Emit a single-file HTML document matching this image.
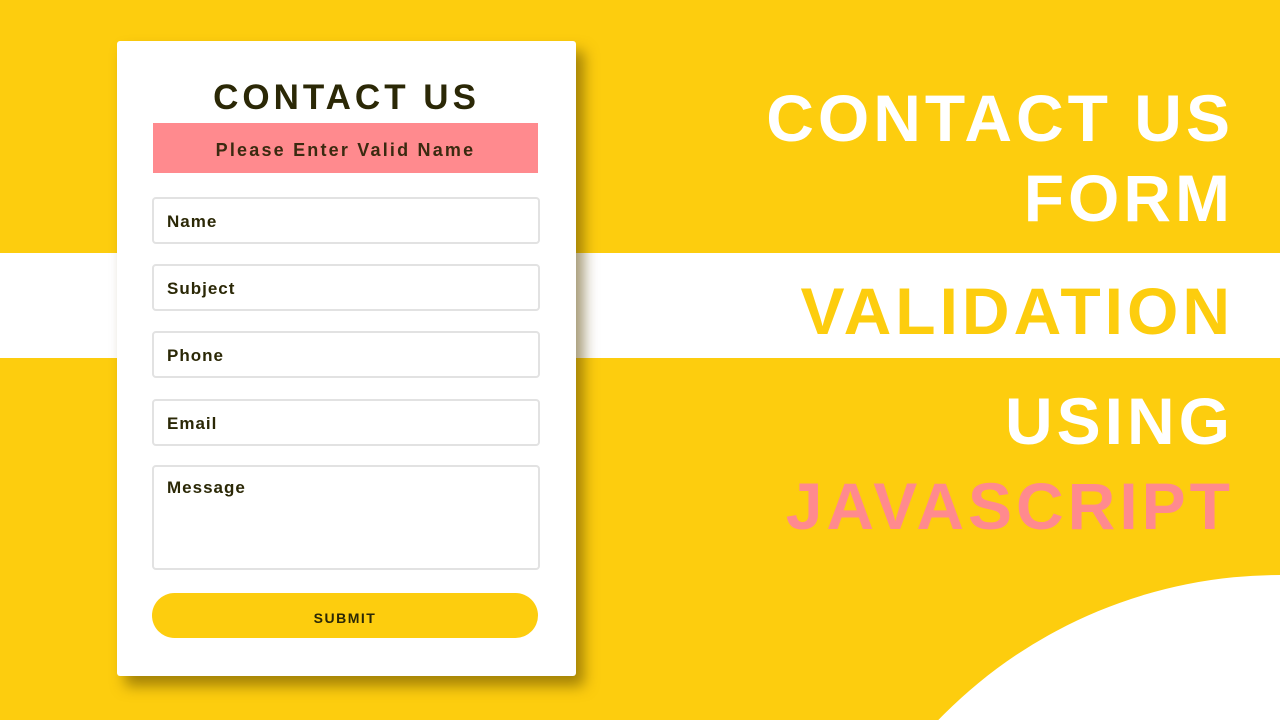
<!DOCTYPE html>
<html><head><style>
*{margin:0;padding:0;box-sizing:border-box}
html,body{width:1280px;height:720px;overflow:hidden}
body{font-family:"Liberation Sans",sans-serif;font-weight:bold}
.wrap{position:relative;width:1280px;height:720px;overflow:hidden;background:#FDCD0E}
.band{position:absolute;left:0;top:253px;width:1280px;height:105px;background:#fff}
.circ{position:absolute;left:805px;top:575px;width:950px;height:950px;border-radius:50%;background:#fff}
.card{position:absolute;left:117px;top:41px;width:459px;height:635px;background:#fff;border-radius:3px;box-shadow:8px 10px 14px rgba(90,70,0,.55)}
.t{position:absolute;left:0;width:459px;text-align:center;font-size:35px;letter-spacing:4px;color:#2b2806}
.err{position:absolute;left:36px;top:82px;width:385px;height:50px;background:#FF8A8E;color:#3a2a10;font-size:18px;letter-spacing:2.2px;text-align:center;line-height:54px;font-weight:bold}
.in{position:absolute;left:35px;width:388px;height:47px;border:2px solid #e2e2e2;border-radius:4px;font-size:17px;letter-spacing:1px;color:#2b2806;padding:13px 0 0 13px}
.btn{position:absolute;left:35px;top:552px;width:386px;height:45px;border-radius:23px;background:#FDCD0E;text-align:center;line-height:50px;font-size:14px;letter-spacing:1.5px;color:#2b2806}
.r{position:absolute;right:46px;font-size:66px;letter-spacing:4px;text-align:right;line-height:1;white-space:nowrap}
</style></head><body><div class="wrap">
<div class="band"></div>
<div class="circ"></div>
<div class="card">
<div class="t" style="top:37px">CONTACT US</div>
<div class="err">Please Enter Valid Name</div>
<div class="in" style="top:156px">Name</div>
<div class="in" style="top:223px">Subject</div>
<div class="in" style="top:290px">Phone</div>
<div class="in" style="top:358px">Email</div>
<div class="in" style="top:424px;height:105px;padding-top:11px">Message</div>
<div class="btn">SUBMIT</div>
</div>
<div class="r" style="top:85px;color:#fff">CONTACT US</div>
<div class="r" style="top:165px;color:#fff">FORM</div>
<div class="r" style="top:278px;color:#FDCD0E">VALIDATION</div>
<div class="r" style="top:388px;color:#fff">USING</div>
<div class="r" style="top:473px;color:#FF8A8E">JAVASCRIPT</div>
</div></body></html>
